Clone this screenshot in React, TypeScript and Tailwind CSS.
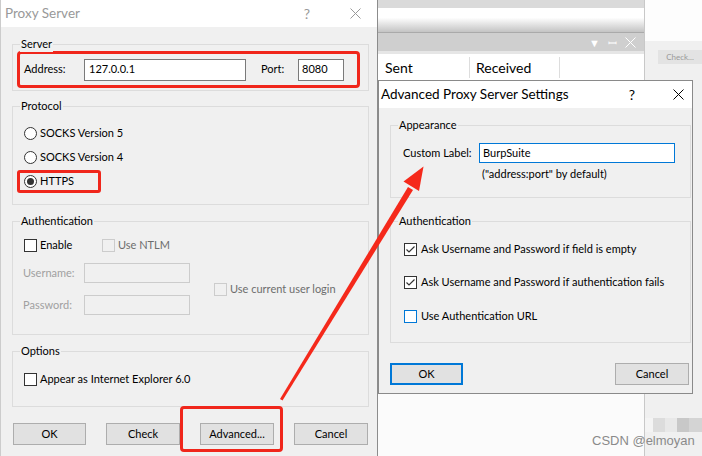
import React from "react";

const font = { fontFamily: "Lato, 'Liberation Sans', sans-serif" };

function CloseX({ color = "#000" }: { color?: string }) {
  return (
    <svg width="11" height="11" viewBox="0 0 11 11">
      <path d="M0.5 0.5 L10.5 10.5 M10.5 0.5 L0.5 10.5" stroke={color} strokeWidth="1" fill="none" />
    </svg>
  );
}

function Group({ label, className, children }: { label: string; className: string; children?: React.ReactNode }) {
  return (
    <div className={`relative border border-[#dcdcdc] ${className}`}>
      <span className="absolute left-[7px] top-[-9px] bg-[#f0f0f0] px-px leading-[16px] text-black">{label}</span>
      {children}
    </div>
  );
}

function Box({ checked = false, disabled = false, blue = false }: { checked?: boolean; disabled?: boolean; blue?: boolean }) {
  const b = disabled ? "border-[#cccccc] bg-transparent" : blue ? "border-[#0078d7] bg-white" : "border-[#333333] bg-white";
  return (
    <span className={`flex h-[13px] w-[13px] shrink-0 items-center justify-center border ${b}`}>
      {checked && (
        <svg width="11" height="11" viewBox="0 0 11 11">
          <path d="M1.5 5.5 L4 8 L9.5 2.5" stroke="#333" strokeWidth="1.2" fill="none" />
        </svg>
      )}
    </span>
  );
}

function Radio({ checked = false }: { checked?: boolean }) {
  return (
    <span className="flex h-[13px] w-[13px] shrink-0 items-center justify-center rounded-full border border-[#333333] bg-white">
      {checked && <span className="h-[7px] w-[7px] rounded-full bg-[#333333]" />}
    </span>
  );
}

function Btn({ children, w, focus = false }: { children: React.ReactNode; w: string; focus?: boolean }) {
  return (
    <div
      className={`flex h-[22px] items-center justify-center bg-[#e1e1e1] text-black ${w} ${
        focus ? "border-2 border-[#0078d7]" : "border border-[#adadad]"
      }`}
    >
      {children}
    </div>
  );
}

function Background() {
  return (
    <div className="absolute left-[378px] top-0 flex h-[456px] w-[324px]">
      <div className="flex w-[267px] flex-col border-r border-[#c8c8c8] bg-[#fafafa]">
        <div className="h-[8px] bg-[#dadada]" />
        <div className="h-[24px] bg-gradient-to-b from-white from-40% to-[#c4c4c4]" />
        <div className="flex h-[19px] items-center justify-end gap-[8px] border-t border-[#aaaaaa] bg-[#cfcfcf] pr-[8px] text-[11px] leading-none text-white">
          <span>▼</span>
          <span>ꟷ</span>
          <CloseX color="#ffffff" />
        </div>
        <div className="h-[3px] bg-[#e6e6e6]" />
        <div className="flex h-[28px] items-center border-b border-[#dddddd] bg-white text-[14px] text-black">
          <span className="w-[92px] border-r border-[#dddddd] pl-[7px]">Sent</span>
          <span className="w-[90px] border-r border-[#dddddd] pl-[6px]">Received</span>
        </div>
        <div className="flex-1 bg-[#fbfbfb]" />
      </div>
      <div className="flex flex-1 flex-col">
        <div className="h-[41px] bg-[#fdfdfd]" />
        <div className="relative flex-1 bg-[#f0f0f0]">
          <div className="ml-[13px] mt-[9px] flex h-[14px] items-center justify-center bg-[#e3e3e3] text-[8px] text-[#9a9a9a]">
            Check...
          </div>
          <div className="mt-[354px] flex h-[14px]">
            <div className="w-[8px] bg-[#f4f4f4]" />
            <div className="w-[12px] bg-[#dcdcdc]" />
            <div className="w-[12px] bg-[#e8e8e8]" />
            <div className="w-[12px] bg-[#c8c8c8]" />
            <div className="w-[13px] bg-[#d4d4d4]" />
          </div>
        </div>
      </div>
    </div>
  );
}

function ProxyServer() {
  return (
    <div className="absolute left-0 top-0 flex h-[456px] w-[378px] flex-col border-l border-r border-l-[#cccccc] border-r-[#8c8c8c] bg-[#f0f0f0] text-[11px] text-black">
      <div className="flex h-[27px] shrink-0 items-center bg-white">
        <span className="ml-[4px] text-[13.5px] text-[#999999]">Proxy Server</span>
        <span className="ml-auto mr-[40px] text-[14px] text-[#999999]">?</span>
        <span className="mr-[16px]">
          <CloseX color="#999999" />
        </span>
      </div>

      <Group label="Server" className="ml-[11px] mt-[17px] h-[47px] w-[357px] pl-[4px] pt-[6px]">
        <div className="flex h-[37px] w-[343px] items-center rounded-[4px] border-[3px] border-[#f0261b] pl-[4px]">
          <span className="w-[60px]">Address:</span>
          <div className="flex h-[22px] w-[162px] items-center border border-[#7a7a7a] bg-white pl-[4px]">127.0.0.1</div>
          <span className="ml-[15px] w-[37px]">Port:</span>
          <div className="flex h-[22px] w-[46px] items-center border border-[#7a7a7a] bg-white pl-[3px]">8080</div>
        </div>
      </Group>

      <Group label="Protocol" className="ml-[11px] mt-[15px] h-[99px] w-[357px] pl-[11px] pt-[14px]">
        <div className="flex h-[24px] items-center">
          <Radio />
          <span className="ml-[3px]">SOCKS Version 5</span>
        </div>
        <div className="flex h-[24px] items-center">
          <Radio />
          <span className="ml-[3px]">SOCKS Version 4</span>
        </div>
        <div className="flex h-[24px] items-center">
          <div className="-ml-[7px] flex h-[23px] w-[84px] items-center rounded-[3px] border-[3px] border-[#f0261b] pl-[4px]">
            <Radio checked />
            <span className="ml-[3px]">HTTPS</span>
          </div>
        </div>
      </Group>

      <Group label="Authentication" className="ml-[11px] mt-[16px] h-[114px] w-[357px] pl-[11px] pt-[11px]">
        <div className="flex h-[24px] items-center">
          <div className="flex w-[78px] items-center">
            <Box />
            <span className="ml-[3px]">Enable</span>
          </div>
          <Box disabled />
          <span className="ml-[3px] text-[#6d6d6d]">Use NTLM</span>
        </div>
        <div className="-ml-[1px] mt-[4px] flex items-center">
          <div className="flex flex-col">
            <div className="flex h-[24px] items-center">
              <span className="w-[61px] text-[#a0a0a0]">Username:</span>
              <div className="h-[20px] w-[106px] border border-[#cccccc] bg-[#f0f0f0]" />
            </div>
            <div className="mt-[8px] flex h-[24px] items-center">
              <span className="w-[61px] text-[#a0a0a0]">Password:</span>
              <div className="h-[20px] w-[106px] border border-[#cccccc] bg-[#f0f0f0]" />
            </div>
          </div>
          <div className="ml-[24px] flex items-center">
            <Box disabled />
            <span className="ml-[3px] text-[#6d6d6d]">Use current user login</span>
          </div>
        </div>
      </Group>

      <Group label="Options" className="ml-[11px] mt-[16px] h-[56px] w-[357px] pl-[11px] pt-[15px]">
        <div className="flex h-[24px] items-center">
          <Box />
          <span className="ml-[3px]">Appear as Internet Explorer 6.0</span>
        </div>
      </Group>

      <div className="ml-[12px] mt-[16px] flex gap-[20px]">
        <Btn w="w-[73px]">OK</Btn>
        <Btn w="w-[74px]">Check</Btn>
        <Btn w="w-[74px]">Advanced...</Btn>
        <Btn w="w-[74px]">Cancel</Btn>
      </div>

      <div className="absolute left-[179px] top-[406px] h-[46px] w-[103px] rounded-[4px] border-[3px] border-[#f0261b]" />
    </div>
  );
}

function Advanced() {
  return (
    <div className="absolute left-[378px] top-[80px] flex h-[314px] w-[315px] flex-col border border-[#8a8a8a] bg-[#f0f0f0] text-[11px] text-black">
      <div className="flex h-[27px] shrink-0 items-center bg-white">
        <span className="ml-[2px] text-[13.5px]">Advanced Proxy Server Settings</span>
        <span className="ml-auto mr-[38px] text-[14px]">?</span>
        <span className="mr-[8px]">
          <CloseX />
        </span>
      </div>

      <Group label="Appearance" className="ml-[11px] mt-[17px] h-[73px] w-[301px] pl-[12px] pt-[17px]">
        <div className="flex items-center">
          <span className="w-[76px]">Custom Label:</span>
          <div className="flex h-[20px] w-[196px] items-center border border-[#0078d7] bg-white pl-[3px]">BurpSuite</div>
        </div>
        <div className="ml-[79px] mt-[3px] leading-[16px]">("address:port" by default)</div>
      </Group>

      <Group label="Authentication" className="ml-[11px] mt-[23px] h-[122px] w-[301px] pl-[13px] pt-[15px]">
        <div className="flex h-[24px] items-center">
          <Box checked />
          <span className="ml-[4px]">Ask Username and Password if field is empty</span>
        </div>
        <div className="mt-[9px] flex h-[24px] items-center">
          <Box checked />
          <span className="ml-[4px]">Ask Username and Password if authentication fails</span>
        </div>
        <div className="mt-[10px] flex h-[24px] items-center">
          <Box blue />
          <span className="ml-[4px]">Use Authentication URL</span>
        </div>
      </Group>

      <div className="ml-[11px] mr-[3px] mt-[20px] flex justify-between">
        <Btn w="w-[73px]" focus>OK</Btn>
        <Btn w="w-[74px]">Cancel</Btn>
      </div>
    </div>
  );
}

function Arrow() {
  return (
    <svg className="pointer-events-none absolute left-0 top-0" width="702" height="456" viewBox="0 0 702 456">
      <polygon points="280,399 282.5,400.5 413,190 408,187" fill="#f5291b" />
      <polygon points="423.5,166.5 403.5,181.5 419,191" fill="#f5291b" />
    </svg>
  );
}

export default function App() {
  return (
    <div className="relative h-[456px] w-[702px] overflow-hidden bg-[#f0f0f0]" style={font}>
      <Background />
      <ProxyServer />
      <Advanced />
      <span className="absolute left-[592px] top-[431px] text-[13px] text-[#8a8a8a]" style={{ fontFamily: "'Liberation Sans', sans-serif" }}>
        CSDN @elmoyan
      </span>
      <Arrow />
    </div>
  );
}
